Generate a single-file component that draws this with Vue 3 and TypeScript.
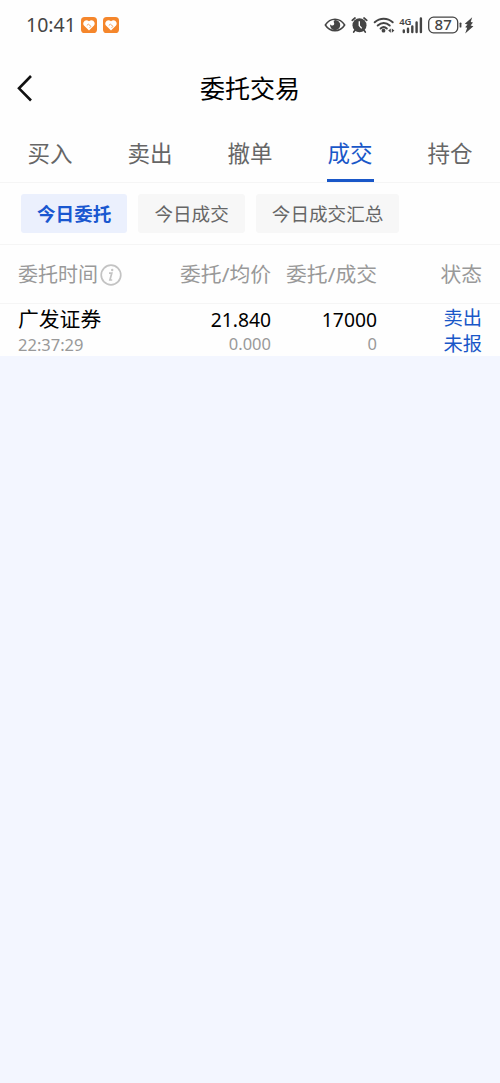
<script setup lang="ts">
import { ref } from 'vue'

interface Order {
  name: string
  time: string
  price: string
  average: string
  quantity: string
  filled: string
  side: string
  status: string
}

const tabs: string[] = ['买入', '卖出', '撤单', '成交', '持仓']
const filters: string[] = ['今日委托', '今日成交', '今日成交汇总']
const activeTab = ref(3)
const activeFilter = ref(0)

const orders: Order[] = [
  {
    name: '广发证券',
    time: '22:37:29',
    price: '21.840',
    average: '0.000',
    quantity: '17000',
    filled: '0',
    side: '卖出',
    status: '未报',
  },
]
</script>

<template>
  <div class="screen">
    <header class="status-bar">
      <span class="clock">10:41</span>
      <svg v-for="n in 2" :key="n" class="health" viewBox="0 0 16 16">
        <rect width="16" height="16" rx="3.6" fill="#f5862b" />
        <path d="M8 13.400 3.200 8.800C.4 5.600 4.600 1 8 4.300c3.400-3.300 7.600 1.300 4.800 4.500Z" fill="#fff" />
        <path d="M5.800 8.400 7.400 7.200 10 9.400 8.600 10.800" fill="none" stroke="#f5a260" stroke-width="1" />
      </svg>
      <span class="spacer"></span>
      <svg class="system" width="152" height="22" viewBox="0 0 152 22">
        <g fill="none" stroke="#444" stroke-linecap="round" stroke-linejoin="round">
          <path d="M1.300 11C6.300 3.300 15.700 3.300 20.700 11 15.700 18.700 6.300 18.700 1.300 11Z" stroke-width="1.500" />
          <path d="M28.200 6.300l2.800-2.300M42.800 6.300 40 4M31 16.300l-1.300 1.800M40 16.300l1.300 1.800" stroke-width="1.700" />
          <path d="M50.700 8.300c5.200-4.700 12.800-4.700 18 0M53.700 11.500c3.700-3.200 8.400-3.200 12 0M56.600 14.500c2-1.700 4.300-1.700 6.200 0" stroke-width="2" />
        </g>
        <path d="M11.500 6a5.100 5.100 0 1 1-5.400 4.300c.6 1 1.500 1.400 2.600 1.200 2-.4 1.700-2.300 1.100-3.300-.4-.9.400-2.100 1.700-2.200Z" fill="#444" />
        <circle cx="35.500" cy="11.200" r="7" fill="#444" />
        <path d="M35.300 7.300v4.300l2.400 2.800" fill="none" stroke="#fff" stroke-width="1.400" />
        <circle cx="59.500" cy="16.700" r="1.900" fill="#444" />
        <path d="M66.800 14.400 64.200 16.600l2.600 2.200ZM67.800 14.400l2.600 2.200-2.600 2.200Z" fill="#444" />
        <text x="75.300" y="10.800" class="network">4G</text>
        <path d="M79.800 16.500V18M84 14.800V18M88.300 12.500V18M92.600 8.500V18M96.900 4.500V18" stroke="#444" stroke-width="2.400" stroke-linecap="round" />
        <rect x="104.700" y="3.200" width="29" height="15.600" rx="4.800" fill="none" stroke="#444" stroke-width="1.300" />
        <path d="M136.500 9.300v3.400" stroke="#444" stroke-width="1.800" stroke-linecap="round" />
        <text x="119.200" y="16.400" text-anchor="middle" class="charge">87</text>
        <path d="M148.200 3.200 140.800 9.800l2.700.6-2.300 2.800 2 .5-2 5.700 8.200-7.200-2.800-.6 2.400-3-2.300-.5Z" fill="#444" />
      </svg>
    </header>

    <div class="title-bar">
      <svg class="back" viewBox="0 0 18 30">
        <path d="M16 3 4 15.300 16 27.500" />
      </svg>
      <h1>委托交易</h1>
    </div>

    <nav class="tabs">
      <button
        v-for="(tab, index) in tabs"
        :key="tab"
        :class="{ active: activeTab === index }"
        @click="activeTab = index"
      >
        <span>{{ tab }}</span>
      </button>
    </nav>

    <div class="filters">
      <button
        v-for="(filter, index) in filters"
        :key="filter"
        :class="{ active: activeFilter === index }"
        @click="activeFilter = index"
      >
        {{ filter }}
      </button>
    </div>

    <div class="row head">
      <div class="time-label">
        委托时间
        <svg viewBox="0 0 22 22">
          <circle cx="11" cy="11" r="9.800" />
          <path d="M9 9.200h2.800L9.900 16h2.300" />
          <circle class="dot" cx="12.200" cy="6" r="1.200" />
        </svg>
      </div>
      <div>委托/均价</div>
      <div>委托/成交</div>
      <div>状态</div>
    </div>

    <div v-for="order in orders" :key="order.time" class="row order">
      <div>
        <p class="name">{{ order.name }}</p>
        <p class="sub time">{{ order.time }}</p>
      </div>
      <div>
        <p class="main">{{ order.price }}</p>
        <p class="sub">{{ order.average }}</p>
      </div>
      <div>
        <p class="main">{{ order.quantity }}</p>
        <p class="sub">{{ order.filled }}</p>
      </div>
      <div class="state">
        <p>{{ order.side }}</p>
        <p>{{ order.status }}</p>
      </div>
    </div>
  </div>
</template>

<style>
body {
  margin: 0;
  background: #f3f6ff;
}
</style>

<style scoped>
.screen {
  width: 500px;
  height: 1083px;
  overflow: hidden;
  background: #f3f6ff;
  font-family: "Noto Sans", "Noto Sans CJK SC", sans-serif;
}
.screen > * {
  box-sizing: border-box;
  background: #fefefe;
}
button {
  margin: 0;
  border: 0;
  background: none;
  font: inherit;
  color: #666;
  white-space: nowrap;
}
p, h1 {
  margin: 0;
}
.status-bar {
  display: flex;
  align-items: center;
  height: 50px;
  padding: 0 24px 0 26px;
}
.clock {
  width: 54.500px;
  font-size: 19.500px;
  line-height: 50px;
  color: #444;
}
.health {
  width: 16px;
  height: 16px;
  margin-right: 6px;
}
.spacer {
  flex: 1;
}
.system {
  flex: none;
  margin-top: -1px;
}
.network {
  font-size: 9.500px;
  font-weight: 600;
  letter-spacing: -0.300px;
  fill: #444;
}
.charge {
  font-size: 15px;
  font-weight: 500;
  fill: #444;
}
.title-bar {
  display: grid;
  grid-template-columns: 50px 1fr 50px;
  align-items: center;
  height: 76px;
}
.back {
  width: 18px;
  height: 30px;
  margin-left: 15px;
  fill: none;
  stroke: #111;
  stroke-width: 2.600;
}
h1 {
  font-size: 25px;
  line-height: 36px;
  font-weight: 400;
  text-align: center;
  color: #000;
}
.tabs {
  display: grid;
  grid-template-columns: repeat(5, 1fr);
  height: 57px;
  border-bottom: 1px solid #f5f5f5;
}
.tabs button {
  height: 56px;
  padding: 0;
  font-size: 22.500px;
}
.tabs span {
  display: block;
  box-sizing: border-box;
  width: 47px;
  height: 56px;
  margin: 0 auto;
  line-height: 55px;
  border-bottom: 3px solid transparent;
}
.tabs .active span {
  color: #1957c8;
  border-color: #1957c8;
}
.filters {
  display: flex;
  gap: 11px;
  height: 62px;
  padding: 11px 21px;
  border-bottom: 1px solid #f5f5f5;
}
.filters button {
  height: 39px;
  padding: 0 16px;
  border-radius: 3px;
  background: #f7f7f7;
  font-size: 18.600px;
  line-height: 40px;
}
.filters .active {
  background: #ebf0fd;
  color: #1957d0;
  font-weight: 700;
}
.row {
  display: grid;
  grid-template-columns: 120px 133px 106px 105px;
  padding: 0 18px;
  text-align: right;
}
.head {
  height: 59px;
  border-bottom: 1px solid #f5f5f5;
  font-size: 20.800px;
  line-height: 59px;
  color: #999;
}
.time-label {
  display: flex;
  align-items: center;
  gap: 2px;
  font-size: 20px;
}
.time-label svg {
  width: 22px;
  height: 22px;
  fill: none;
  stroke: #c3c3c3;
  stroke-width: 1.700;
}
.time-label .dot {
  fill: #c3c3c3;
  stroke: none;
}
.order {
  height: 52px;
}
.order > div:first-child {
  text-align: left;
}
.name {
  font-size: 20.800px;
  line-height: 31px;
  color: #000;
}
.main {
  font-size: 19.300px;
  line-height: 31px;
  color: #000;
}
.sub {
  font-size: 16.500px;
  line-height: 17px;
  color: #999;
}
.sub.time {
  line-height: 20px;
}
.state {
  padding-top: 1px;
  font-size: 19.300px;
  line-height: 26px;
  color: #1957c8;
}
</style>
